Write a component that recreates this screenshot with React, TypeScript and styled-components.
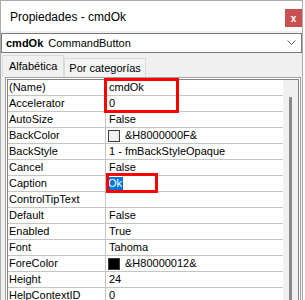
import styled, { createGlobalStyle } from "styled-components";

const GlobalStyle = createGlobalStyle`
  html, body {
    margin: 0;
    background: #ffffff;
    overflow: hidden;
  }
  body {
    font-family: "Liberation Sans", Arial, sans-serif;
  }
`;

const Window = styled.div`
  width: 301px;
  height: 299px;
  border: 1px solid #ababab;
  border-bottom: none;
  background: #f0f0f0;
  overflow: hidden;
`;

const TitleBar = styled.div`
  height: 30px;
  background: #ffffff;
  display: flex;
  align-items: center;
  padding-left: 9px;
  font-size: 12px;
  color: #000;
`;

const Title = styled.span`
  flex: 1;
  margin-top: 1px;
`;

const CloseButton = styled.div`
  width: 17px;
  height: 18px;
  margin-top: 4px;
  background: #c75050;
  color: #fff;
  font-size: 10px;
  font-weight: bold;
  display: flex;
  align-items: center;
  justify-content: center;
`;

const Combo = styled.div`
  margin-top: 2px;
  height: 18px;
  border: 1px solid #7a7a7a;
  background: #fff;
  display: flex;
  align-items: center;
  padding-left: 4px;
  font-size: 11px;
`;

const ObjName = styled.b`
  margin-right: 5px;
`;

const ComboText = styled.span`
  flex: 1;
`;

const Chevron = styled.svg`
  margin-right: 5px;
`;

const TabStrip = styled.div`
  display: flex;
  align-items: flex-end;
  margin-top: 2px;
  padding-left: 1px;
  height: 22px;
`;

const Tab = styled.div<{ $active?: boolean }>`
  height: ${(p) => (p.$active ? 22 : 19)}px;
  box-sizing: border-box;
  border: 1px solid #d9d9d9;
  border-bottom: none;
  border-right: ${(p) => (p.$active ? "1px solid #d9d9d9" : "1px solid #d9d9d9")};
  background: ${(p) => (p.$active ? "#f0f0f0" : "#f3f3f3")};
  padding: 0 ${(p) => (p.$active ? 6 : 4)}px 0 ${(p) => (p.$active ? 6 : 4)}px;
  font-size: 11px;
  line-height: ${(p) => (p.$active ? 20 : 18)}px;
  margin-left: ${(p) => (p.$active ? 0 : 0)}px;
`;

const GridOuter = styled.div`
  margin-left: 4px;
  width: 292px;
  border: 1px solid #a0a0a0;
  border-bottom: none;
  padding: 1px 1px 0 1px;
  background: #fff;
`;

const GridInner = styled.div`
  position: relative;
  border: 1px solid #828282;
  border-bottom: none;
  display: flex;
  height: 240px;
`;

const Rows = styled.div`
  flex: 1;
  background: #fff;
`;

const Row = styled.div`
  display: grid;
  grid-template-columns: 98px 1fr;
  height: 16px;
  box-sizing: border-box;
  border-bottom: 1px solid #c4c4c4;
  font-size: 11px;
  line-height: 15px;
  color: #000;
`;

const NameCell = styled.div`
  padding-left: 1px;
  border-right: 1px solid #c4c4c4;
  white-space: nowrap;
  overflow: hidden;
`;

const ValueCell = styled.div`
  padding-left: 3px;
  display: flex;
  align-items: center;
  white-space: nowrap;
`;

const Swatch = styled.span<{ $color: string }>`
  width: 10px;
  height: 10px;
  border: 1px solid #3c3c3c;
  background: ${(p) => p.$color};
  margin: 0 5px 0 -1px;
`;

const Selected = styled.span`
  background: #0078d7;
  color: #fff;
  padding: 0 1px 0 0;
  margin-left: -1px;
  line-height: 13px;
`;

const ScrollTrack = styled.div`
  width: 15px;
  background: #f0f0f0;
  display: flex;
  justify-content: center;
`;

const ScrollThumb = styled.div`
  width: 3px;
  margin-top: 17px;
  height: 400px;
  background: #8a8a8a;
`;

const Highlight = styled.div<{ $l: number; $t: number; $w: number; $h: number }>`
  position: absolute;
  left: ${(p) => p.$l}px;
  top: ${(p) => p.$t}px;
  width: ${(p) => p.$w}px;
  height: ${(p) => p.$h}px;
  box-sizing: border-box;
  border: 3px solid #ff0000;
`;

type Prop = { name: string; value: string; swatch?: string; selected?: boolean };

const props: Prop[] = [
  { name: "(Name)", value: "cmdOk" },
  { name: "Accelerator", value: "0" },
  { name: "AutoSize", value: "False" },
  { name: "BackColor", value: "&H8000000F&", swatch: "#f0f0f0" },
  { name: "BackStyle", value: "1 - fmBackStyleOpaque" },
  { name: "Cancel", value: "False" },
  { name: "Caption", value: "Ok", selected: true },
  { name: "ControlTipText", value: "" },
  { name: "Default", value: "False" },
  { name: "Enabled", value: "True" },
  { name: "Font", value: "Tahoma" },
  { name: "ForeColor", value: "&H80000012&", swatch: "#000000" },
  { name: "Height", value: "24" },
  { name: "HelpContextID", value: "0" },
  { name: "Left", value: "12" },
];

export default function App() {
  return (
    <>
      <GlobalStyle />
      <Window>
        <TitleBar>
          <Title>Propiedades - cmdOk</Title>
          <CloseButton>x</CloseButton>
        </TitleBar>
        <Combo>
          <ObjName>cmdOk</ObjName>
          <ComboText>CommandButton</ComboText>
          <Chevron width="9" height="6" viewBox="0 0 9 6">
            <polyline points="0.5,0.5 4.5,4.5 8.5,0.5" fill="none" stroke="#606060" strokeWidth="1" />
          </Chevron>
        </Combo>
        <TabStrip>
          <Tab $active>Alfabética</Tab>
          <Tab>Por categorías</Tab>
        </TabStrip>
        <GridOuter>
          <GridInner>
            <Rows>
              {props.map((p) => (
                <Row key={p.name}>
                  <NameCell>{p.name}</NameCell>
                  <ValueCell>
                    {p.swatch && <Swatch $color={p.swatch} />}
                    {p.selected ? <Selected>{p.value}</Selected> : p.value}
                  </ValueCell>
                </Row>
              ))}
            </Rows>
            <ScrollTrack>
              <ScrollThumb />
            </ScrollTrack>
            <Highlight $l={96} $t={-2} $w={75} $h={35} />
            <Highlight $l={98} $t={93} $w={52} $h={20} />
          </GridInner>
        </GridOuter>
      </Window>
    </>
  );
}
